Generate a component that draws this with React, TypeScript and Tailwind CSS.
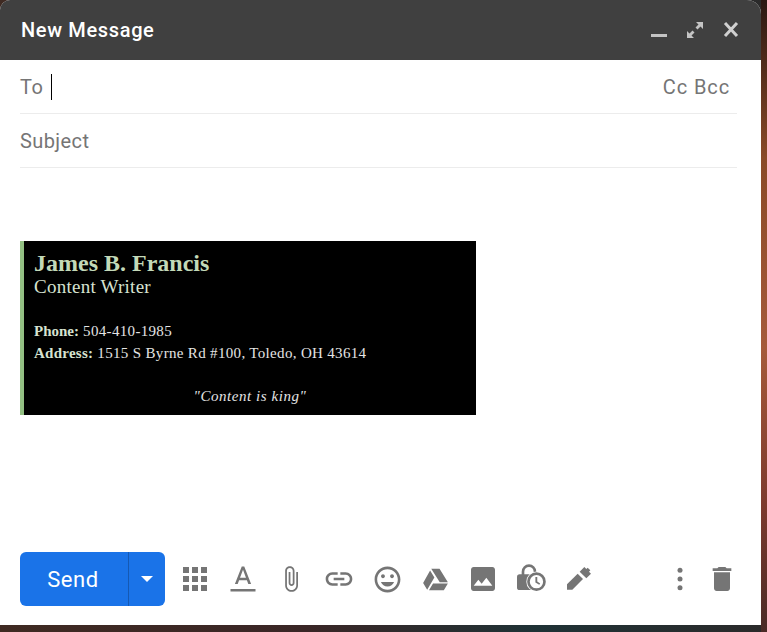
import React from 'react';

const ICON = 'fill-[#757575]';

const ToolIcon: React.FC<{ size?: number; children: React.ReactNode }> = ({ size = 32, children }) => (
  <div className="w-12 h-12 flex items-center justify-center shrink-0">
    <svg viewBox="0 0 24 24" width={size} height={size} className={ICON}>
      {children}
    </svg>
  </div>
);

const App: React.FC = () => {
  return (
    <div className="w-[767px] h-[632px] overflow-hidden bg-[linear-gradient(90deg,#3f2a22_0%,#3a2626_40%,#1f3236_70%,#2b2a2a_100%)] relative font-['Roboto',sans-serif]">
      <div className="absolute right-0 top-0 w-[6px] h-[632px] bg-[linear-gradient(180deg,#2a1712_0%,#8a4a28_25%,#a55a3a_55%,#7c3a2e_80%,#4a2a26_100%)]" />
      <div className="relative w-[761px] h-[625px] bg-white rounded-tl-[10px] rounded-tr-[14px] overflow-hidden flex flex-col">
        <div className="h-[60px] shrink-0 bg-[#404040] flex items-center justify-between pl-[21px] pr-[20px]">
          <span className="text-white text-[20px] font-medium tracking-[0.65px]">New Message</span>
          <div className="flex items-center gap-[16px]">
            <svg viewBox="0 0 20 20" width="20" height="20" className="fill-[#c4c4c4]">
              <rect x="2" y="14" width="16" height="3" />
            </svg>
            <svg viewBox="0 0 20 20" width="20" height="20" className="fill-[#c4c4c4]">
              <path d="M11 2h7v7l-2.500-2.500-3 3-2-2 3-3zM9 18H2v-7l2.500 2.500 3-3 2 2-3 3z" />
            </svg>
            <svg viewBox="0 0 20 20" width="20" height="20" className="stroke-[#d0d0d0]" strokeWidth="3">
              <path d="M4 3l12 13M16 3L4 16" />
            </svg>
          </div>
        </div>

        <div className="ml-5 mr-6 h-[54px] shrink-0 border-b border-[#ececec] flex items-center justify-between pr-[7px] text-[#757575] text-[20px] tracking-[0.6px]">
          <div className="flex items-center">
            <span>To</span>
            <span className="ml-[7px] w-[1px] h-[26px] bg-black" />
          </div>
          <span className="tracking-[0.9px]">Cc Bcc</span>
        </div>
        <div className="ml-5 mr-6 h-[54px] shrink-0 border-b border-[#ececec] flex items-center text-[#757575] text-[20px] tracking-[0.4px]">
          Subject
        </div>

        <div className="flex-1 pt-[73px] pl-5">
          <div className="w-[456px] h-[174px] bg-black border-l-4 border-[#93c083] pl-[10px] pt-[8px] font-['Liberation_Serif',serif] text-[#d6e2d0]">
            <div className="text-[24px] font-bold leading-[28px] text-[#c3d9b8]">James B. Francis</div>
            <div className="text-[19px] leading-[20px] tracking-[0.25px]">Content Writer</div>
            <div className="mt-[23px] text-[15px] leading-[22px] text-[#e4e4e4] tracking-[0.33px]">
              <div><b className="text-[#d6e2d0] tracking-normal">Phone:</b> 504-410-1985</div>
              <div><b className="text-[#d6e2d0] tracking-[0.25px]">Address:</b> 1515 S Byrne Rd #100, Toledo, OH 43614</div>
            </div>
            <div className="mt-[22px] text-center italic text-[15px] leading-[20px] text-[#e4e4e4] pr-[10px] tracking-[0.55px]">"Content is king"</div>
          </div>
        </div>

        <div className="h-[73px] shrink-0 flex pl-5 pr-[18px]">
          <div className="w-[145px] h-[54px] bg-[#1a73e8] rounded-[6px] flex text-white">
            <div className="w-[109px] flex items-center justify-center pr-[2px] text-[22px] tracking-[0.6px] border-r border-[#1559b3]">Send</div>
            <div className="flex-1 flex items-center justify-center">
              <div className="w-0 h-0 border-l-[6px] border-r-[6px] border-t-[6px] border-l-transparent border-r-transparent border-t-white" />
            </div>
          </div>
          <div className="flex-1 flex items-center h-[54px] ml-[6px]">
            <ToolIcon size={36}>
              <path d="M4 8h4V4H4v4zm6 12h4v-4h-4v4zm-6 0h4v-4H4v4zm0-6h4v-4H4v4zm6 0h4v-4h-4v4zm6-10v4h4V4h-4zm-6 4h4V4h-4v4zm6 6h4v-4h-4v4zm0 6h4v-4h-4v4z" />
            </ToolIcon>
            <ToolIcon size={30}>
              <path d="M11 2L5.500 16h2.250l1.120-3h6.250l1.120 3h2.250L13 2h-2zm-1.380 9L12 4.670 14.380 11H9.620z" />
              <rect x="2" y="20" width="20" height="2" />
            </ToolIcon>
            <ToolIcon size={28}>
              <path d="M16.500 6v11.500c0 2.210-1.790 4-4 4s-4-1.790-4-4V5c0-1.380 1.120-2.500 2.500-2.500s2.500 1.120 2.500 2.500v10.500c0 .55-.45 1-1 1s-1-.45-1-1V6H10v9.500c0 1.380 1.120 2.500 2.500 2.500s2.500-1.120 2.500-2.500V5c0-2.210-1.790-4-4-4S7 2.790 7 5v12.500c0 3.040 2.460 5.500 5.500 5.500s5.500-2.460 5.500-5.500V6h-1.500z" />
            </ToolIcon>
            <ToolIcon size={32}>
              <path d="M3.900 12c0-1.710 1.390-3.100 3.100-3.100h4V7H7c-2.760 0-5 2.240-5 5s2.240 5 5 5h4v-1.900H7c-1.710 0-3.100-1.390-3.100-3.100zM8 13h8v-2H8v2zm9-6h-4v1.900h4c1.710 0 3.100 1.390 3.100 3.100s-1.390 3.100-3.100 3.100h-4V17h4c2.760 0 5-2.240 5-5s-2.240-5-5-5z" />
            </ToolIcon>
            <ToolIcon size={31}>
              <path d="M11.990 2C6.470 2 2 6.480 2 12s4.470 10 9.990 10C17.520 22 22 17.520 22 12S17.520 2 11.990 2zM12 20c-4.420 0-8-3.580-8-8s3.580-8 8-8 8 3.580 8 8-3.580 8-8 8zm3.500-9c.83 0 1.500-.67 1.500-1.500S16.330 8 15.500 8 14 8.670 14 9.500s.67 1.500 1.500 1.500zm-7 0c.83 0 1.500-.67 1.500-1.500S9.330 8 8.500 8 7 8.670 7 9.500 7.670 11 8.500 11zm3.500 6.500c2.330 0 4.310-1.460 5.110-3.500H6.890c.8 2.040 2.780 3.500 5.110 3.500z" />
            </ToolIcon>
            <ToolIcon size={27}>
              <path d="M8.200 2.500h7.400L23 14.500h-7.200L8.200 2.500zM7.200 4L11 10.200 4.600 21 1 15 7.200 4zM9.800 15.500H23l-3.600 6H6.200l3.600-6z" />
            </ToolIcon>
            <ToolIcon size={32}>
              <path d="M21 19V5c0-1.100-.9-2-2-2H5c-1.100 0-2 .9-2 2v14c0 1.100.9 2 2 2h14c1.100 0 2-.9 2-2zM8.500 12.500l2.500 3L14.500 11l4.500 6H5l3.500-4.500z" fillRule="evenodd" />
            </ToolIcon>
            <ToolIcon size={32}>
              <path d="M5 8.500V6.500a5.500 5.500 0 0 1 11 0V8.500h1a2 2 0 0 1 1 .3V20.300H3.500a2 2 0 0 1-2-2V10.500a2 2 0 0 1 2-2H5zm2 0h7V6.500a3.500 3.500 0 0 0-7 0V8.500z" fillRule="evenodd" />
              <circle cx="16.100" cy="14" r="7.600" className="fill-white" />
              <path d="M16.100 7a7 7 0 1 0 0 14 7 7 0 0 0 0-14zm0 12a5 5 0 1 1 0-10 5 5 0 0 1 0 10zm.6-8.500h-1.400v4.100l2.900 1.800.7-1.100-2.200-1.400v-3.400z" fillRule="evenodd" />
            </ToolIcon>
            <ToolIcon size={32}>
              <path d="M3 16l8-8 4 4-8 8H3v-4z" />
              <path d="M12.500 6.500L16 3l1.500 1.500 1-1 2 2-1 1L21 8l-3.500 3.500-5-5z" />
            </ToolIcon>
            <div className="flex-1" />
            <div className="w-[42px] h-12 flex items-center justify-center">
              <svg viewBox="0 0 24 24" width="30" height="30" className={ICON}>
                <circle cx="12" cy="5" r="2" />
                <circle cx="12" cy="12" r="2" />
                <circle cx="12" cy="19" r="2" />
              </svg>
            </div>
            <div className="w-[42px] h-12 flex items-center justify-center">
              <svg viewBox="0 0 24 24" width="32" height="32" className={ICON}>
                <path d="M6 19c0 1.100.9 2 2 2h8c1.100 0 2-.9 2-2V7H6v12zM19 4h-3.500l-1-1h-5l-1 1H5v2h14V4z" />
              </svg>
            </div>
          </div>
        </div>
      </div>
    </div>
  );
};

export default App;
